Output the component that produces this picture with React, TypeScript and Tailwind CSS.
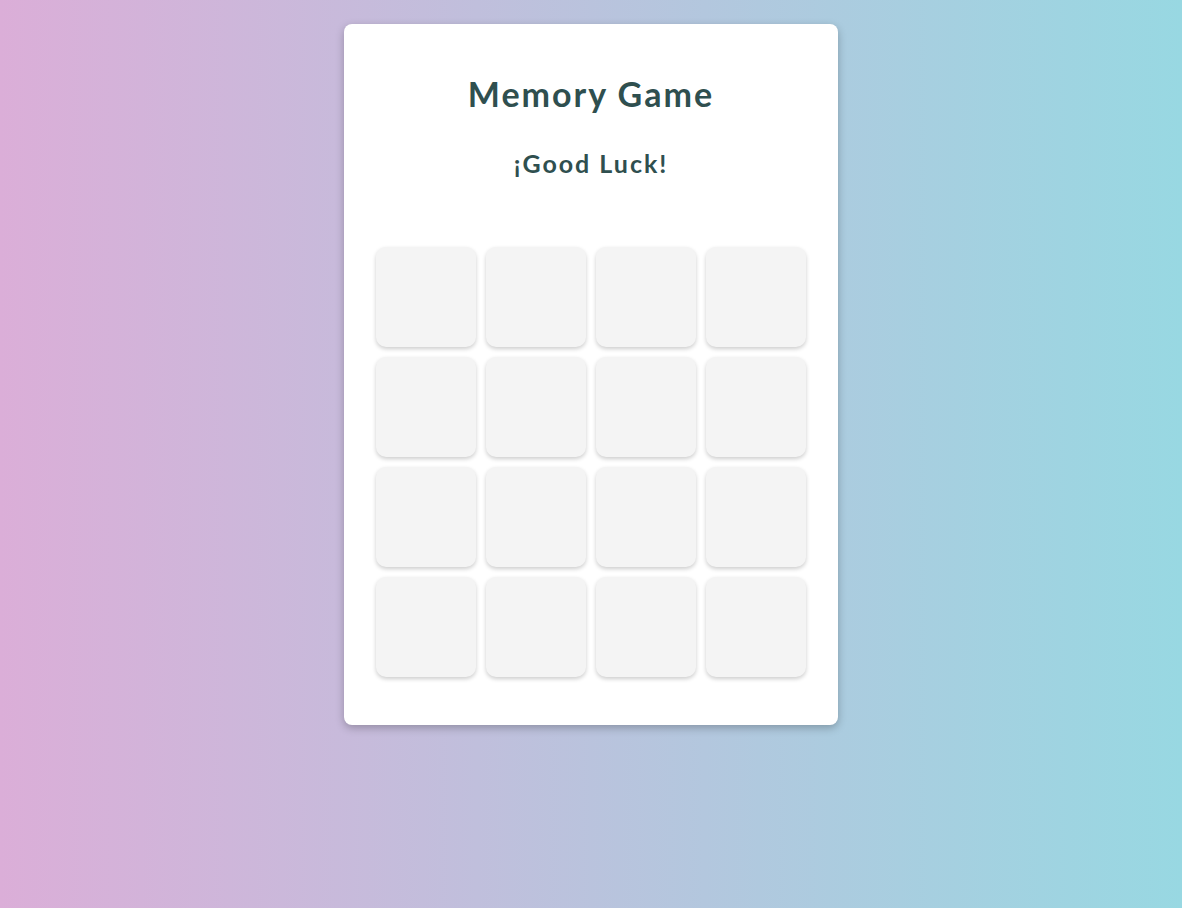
export default function App() {
  const tiles = Array.from({ length: 16 });
  return (
    <div
      className="min-h-[908px] w-full bg-[linear-gradient(to_right,#dbaed8,#98d8e2)] flex justify-center pt-6"
      style={{ fontFamily: '"Lato", "Open Sans", sans-serif' }}
    >
      <div className="w-[494px] h-[701px] bg-white rounded-lg shadow-[0_3px_8px_rgba(0,0,0,0.25)] px-8 pt-8 flex flex-col items-center">
        <h1 className="mt-[16px] h-[44px] leading-[44px] text-[34px] font-bold tracking-[2px] text-[#2f4f4f]">
          Memory Game
        </h1>
        <h2 className="mt-[31px] h-[32px] leading-[32px] text-[25px] font-bold tracking-[2px] text-[#2f4f4f]">
          ¡Good Luck!
        </h2>
        <div className="mt-[68px] grid grid-cols-4 gap-[10px]">
          {tiles.map((_, i) => (
            <div
              key={i}
              className="w-[100px] h-[100px] rounded-[10px] bg-[#f4f4f4] shadow-[0_2px_4px_rgba(0,0,0,0.2)]"
            />
          ))}
        </div>
      </div>
    </div>
  );
}
